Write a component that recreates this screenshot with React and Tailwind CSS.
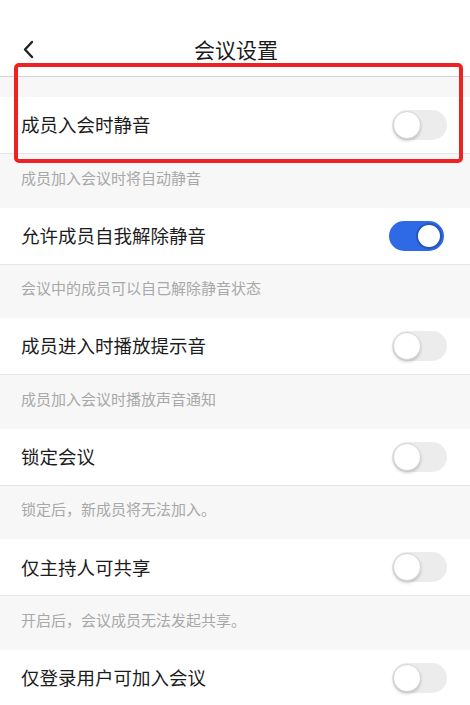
import React from 'react'

const SETTINGS = [
  { title: '成员入会时静音', desc: '成员加入会议时将自动静音', on: false },
  { title: '允许成员自我解除静音', desc: '会议中的成员可以自己解除静音状态', on: true },
  { title: '成员进入时播放提示音', desc: '成员加入会议时播放声音通知', on: false },
  { title: '锁定会议', desc: '锁定后，新成员将无法加入。', on: false },
  { title: '仅主持人可共享', desc: '开启后，会议成员无法发起共享。', on: false },
  { title: '仅登录用户可加入会议', desc: '', on: false },
]

const FONT = { fontFamily: '"Noto Sans CJK SC", "Liberation Sans", sans-serif' }

function Toggle({ on }) {
  if (on) {
    return (
      <div className="mr-[3px] flex h-[30px] w-[55px] items-center justify-end rounded-full bg-[#2f6ae6] p-[2px]">
        <div className="h-[26px] w-[26px] rounded-full border-2 border-[#2556b8] bg-white" />
      </div>
    )
  }
  return (
    <div className="flex h-[30px] w-[55px] items-center rounded-full bg-[#ececec] p-[1px]">
      <div className="h-[28px] w-[28px] rounded-full border border-[#d6d6d6] bg-white shadow-[0_2px_3px_rgba(0,0,0,0.18)]" />
    </div>
  )
}

export default function App() {
  return (
    <div className="relative h-[705px] w-[470px] overflow-hidden bg-[#f7f7f7]" style={FONT}>
      <header className="relative flex h-[77px] items-end justify-center border-b border-[#d4d4d8] bg-white pb-[16px]">
        <svg className="absolute left-[22px] top-[40px]" width="12" height="19" viewBox="0 0 12 19" fill="none">
          <path d="M10 2L3 9.5L10 17" stroke="#222" strokeWidth="2.4" strokeLinecap="round" strokeLinejoin="round" />
        </svg>
        <h1 className="ml-[2px] text-[21px] leading-none text-[#1a1a1a]">会议设置</h1>
      </header>

      <div className="h-[20px]" />

      {SETTINGS.map((s) => (
        <div key={s.title}>
          <div className="flex h-[57px] items-center justify-between border-b border-[#e6e6e6] bg-white pl-[21px] pr-[23px]">
            <span className="text-[18.5px] text-[#1c1c1c]">{s.title}</span>
            <Toggle on={s.on} />
          </div>
          <div className="flex h-[53.6px] items-center pl-[21px] pb-[6px] text-[15px] text-[#a8a8a8]">{s.desc}</div>
        </div>
      ))}

      <div className="pointer-events-none absolute left-[14px] top-[63px] h-[100px] w-[449px] rounded-[5px] border-4 border-[#ee2222]" />
    </div>
  )
}
